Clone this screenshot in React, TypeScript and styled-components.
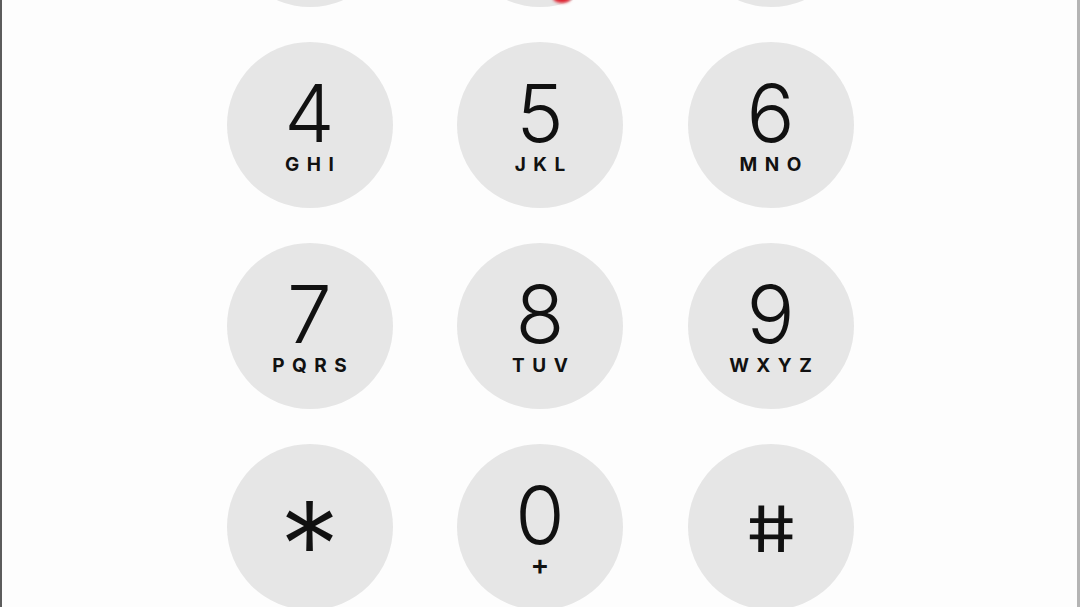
import styled, { createGlobalStyle } from "styled-components";

const GlobalStyle = createGlobalStyle`
  html, body {
    margin: 0;
    padding: 0;
    background: #fdfdfd;
    overflow: hidden;
  }
  * {
    box-sizing: border-box;
  }
`;

const Screen = styled.div`
  width: 1080px;
  height: 607px;
  overflow: hidden;
  background: #fdfdfd;
  border-left: 2px solid #5c5c5c;
  border-right: 3px solid #b4b4b4;
  display: flex;
  justify-content: center;
  align-items: flex-start;
  font-family: Inter, "Liberation Sans", Arial, sans-serif;
`;

const Keypad = styled.div`
  display: grid;
  grid-template-columns: repeat(3, 166px);
  grid-auto-rows: 166px;
  column-gap: 64.5px;
  row-gap: 35px;
  margin-top: -159px;
  margin-left: 1px;
`;

const Key = styled.div<{ $symbol?: boolean }>`
  position: relative;
  width: 166px;
  height: 166px;
  border-radius: 50%;
  background: #e6e6e6;
  display: flex;
  flex-direction: column;
  align-items: center;
  justify-content: ${(p) => (p.$symbol ? "center" : "flex-start")};
  padding-top: ${(p) => (p.$symbol ? "0" : "31px")};
  color: #111;
`;

const Digit = styled.div`
  font-size: 80px;
  font-weight: 350;
  line-height: 80px;
  height: 80px;
`;

const Star = styled.div`
  font-size: 122px;
  font-weight: 300;
  line-height: 1;
  transform: translateY(19px);
`;

// Inter's hash leans; straighten and widen it like the iOS keypad glyph
const Hash = styled.div`
  font-size: 64px;
  font-weight: 420;
  line-height: 1;
  transform: translate(1px, 2px) skewX(11deg) scaleX(1.22);
`;

const Letters = styled.div`
  margin-top: 2px;
  font-size: 19px;
  font-weight: 700;
  line-height: 19px;
  letter-spacing: 7.5px;
  padding-left: 7.5px;
`;

const Plus = styled.div`
  margin-top: -4px;
  font-size: 28px;
  font-weight: 600;
  line-height: 28px;
`;

// touch highlight left over on the "2" key
const TouchDot = styled.span`
  position: absolute;
  left: 96px;
  top: 152px;
  width: 18px;
  height: 10px;
  border-radius: 50%;
  background: #e0202e;
  filter: blur(1.5px);
`;

type KeyData = { digit: string; letters?: string };

const keys: KeyData[] = [
  { digit: "1" },
  { digit: "2", letters: "ABC" },
  { digit: "3", letters: "DEF" },
  { digit: "4", letters: "GHI" },
  { digit: "5", letters: "JKL" },
  { digit: "6", letters: "MNO" },
  { digit: "7", letters: "PQRS" },
  { digit: "8", letters: "TUV" },
  { digit: "9", letters: "WXYZ" },
];

export default function App() {
  return (
    <>
      <GlobalStyle />
      <Screen>
        <Keypad>
          {keys.map((k) => (
            <Key key={k.digit}>
              <Digit>{k.digit}</Digit>
              {k.letters && <Letters>{k.letters}</Letters>}
              {k.digit === "2" && <TouchDot />}
            </Key>
          ))}
          <Key $symbol>
            <Star>*</Star>
          </Key>
          <Key>
            <Digit>0</Digit>
            <Plus>+</Plus>
          </Key>
          <Key $symbol>
            <Hash>#</Hash>
          </Key>
        </Keypad>
      </Screen>
    </>
  );
}
